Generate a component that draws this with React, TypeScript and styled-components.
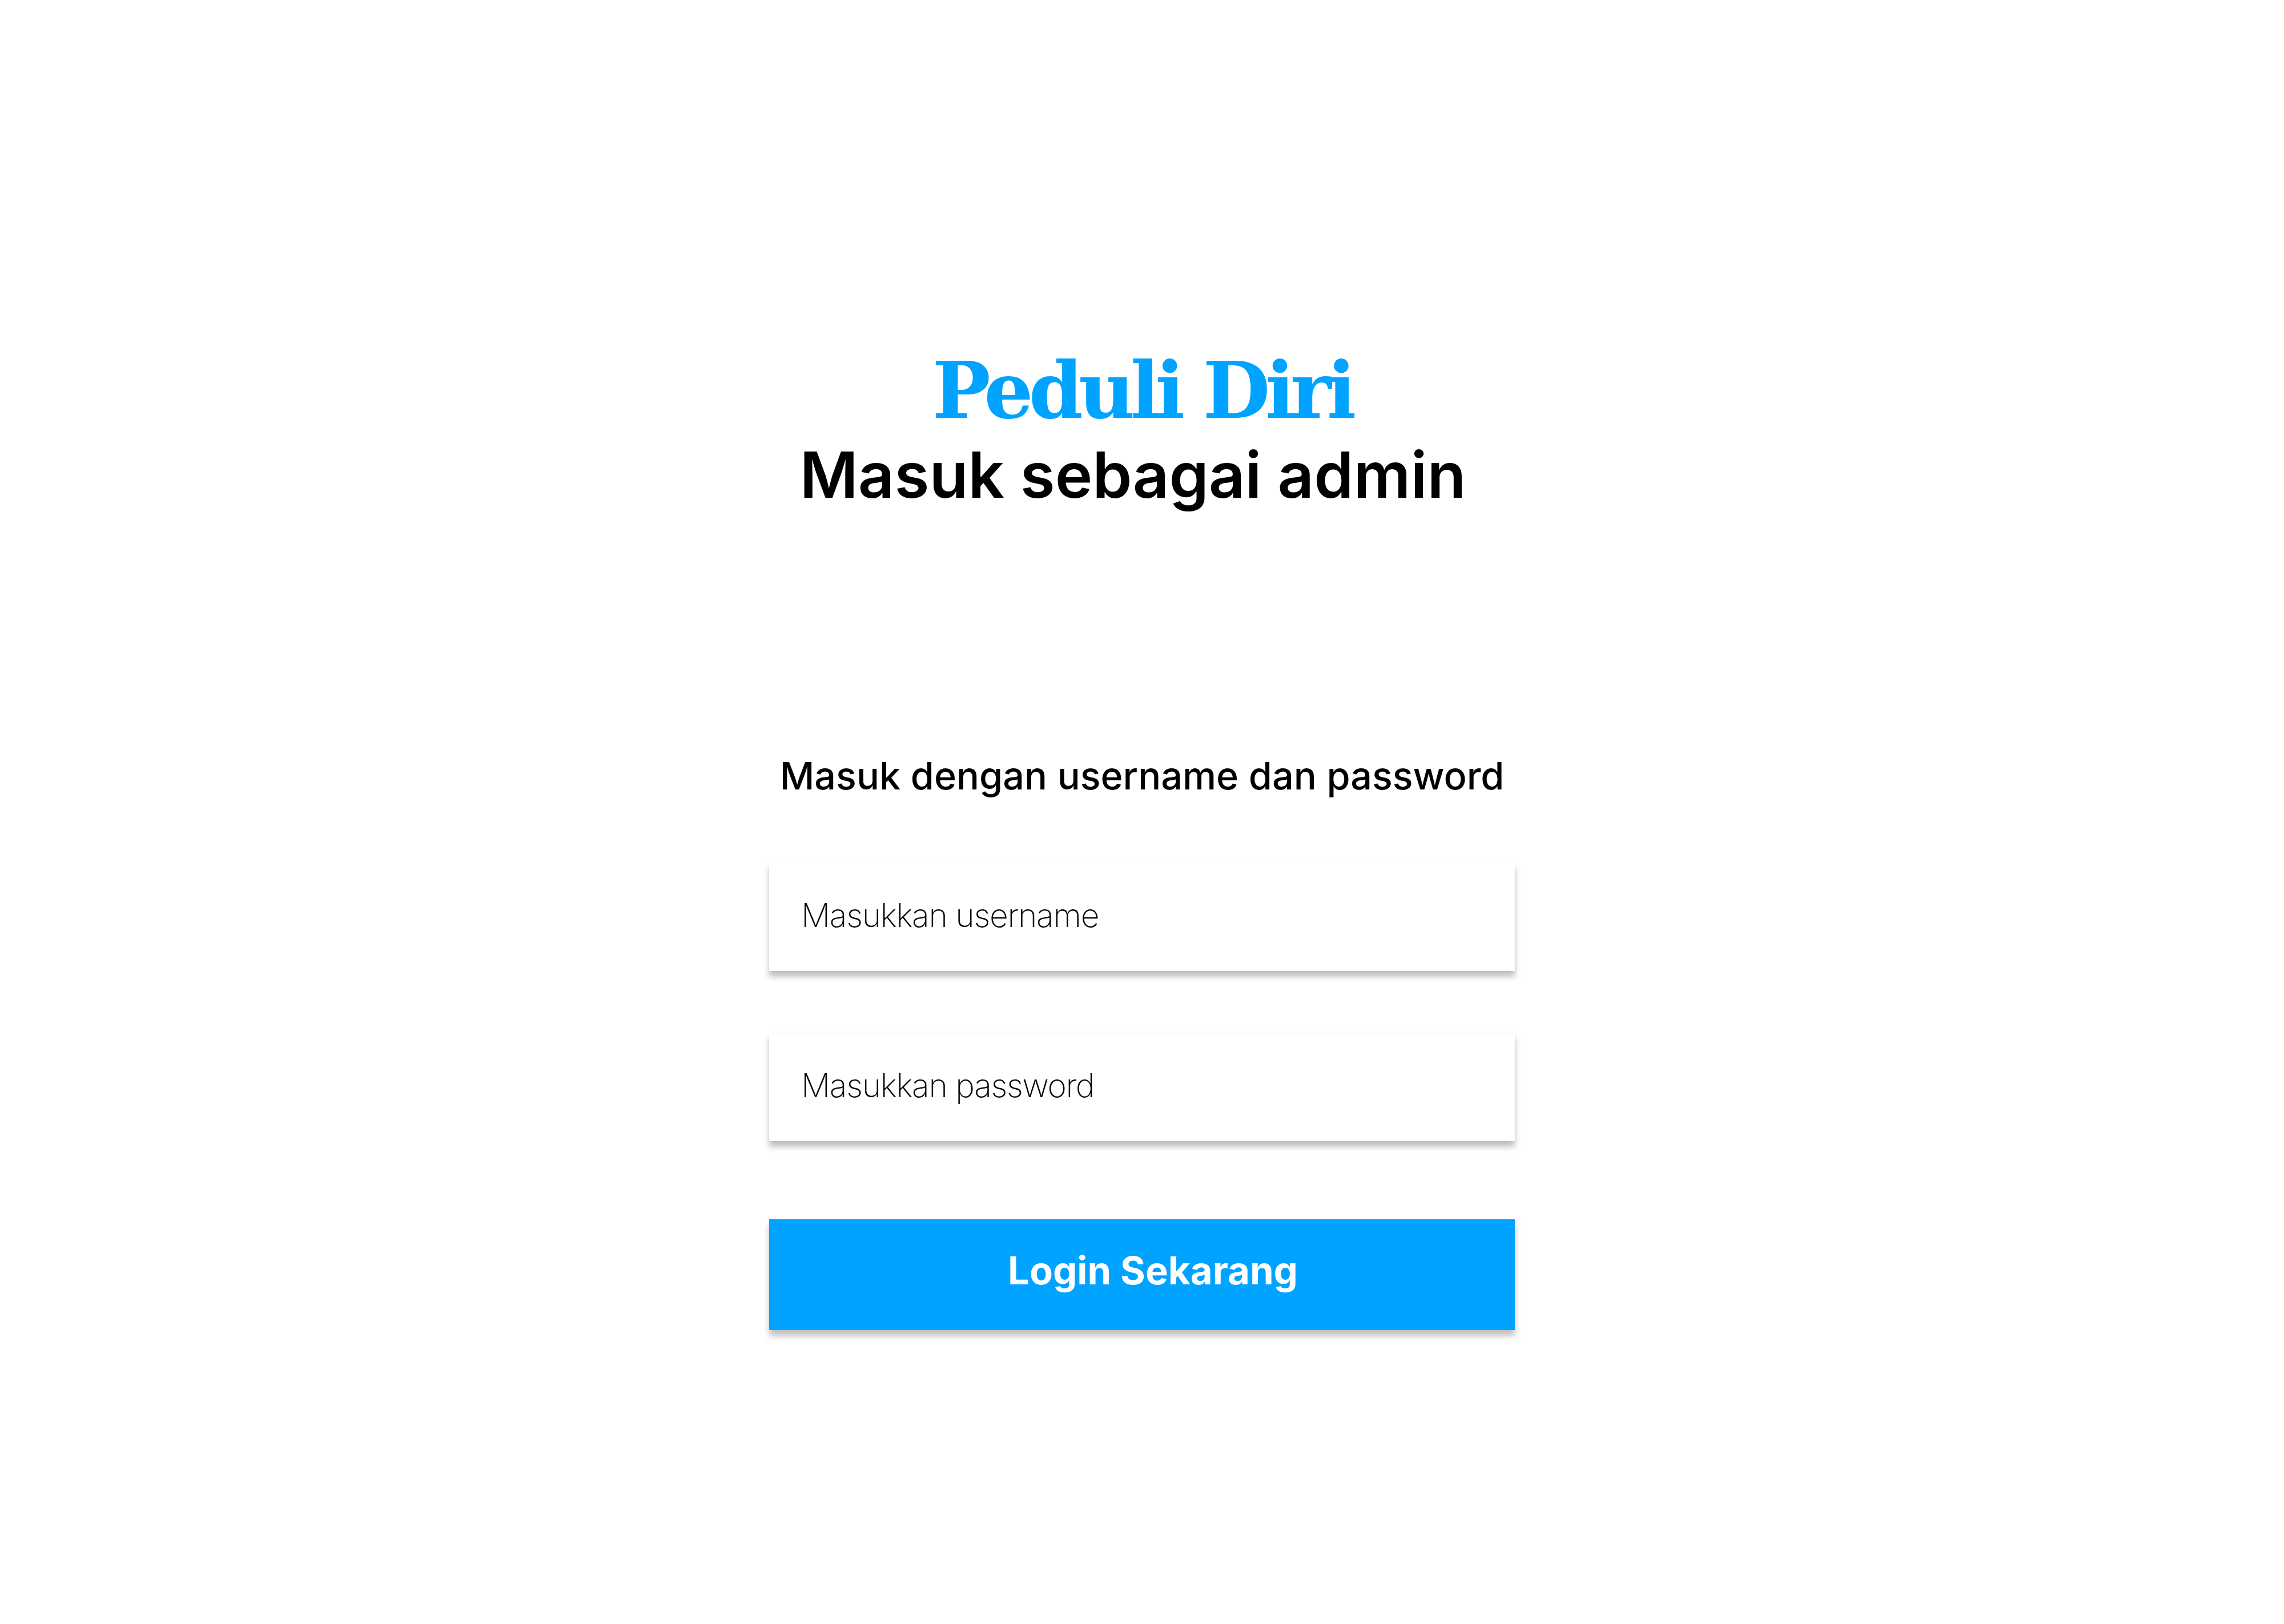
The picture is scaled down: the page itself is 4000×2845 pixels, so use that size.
import React from 'react';
import styled, { createGlobalStyle } from 'styled-components';

const GlobalStyle = createGlobalStyle`
  html, body {
    margin: 0;
    padding: 0;
    background: #ffffff;
  }

  body {
    font-family: Inter, "Noto Sans", sans-serif;
    color: #000000;
  }

  * {
    box-sizing: border-box;
  }
`;

const Page = styled.main`
  min-height: 2845px;
  display: flex;
  flex-direction: column;
  align-items: center;
  padding-top: 616px;
`;

const Header = styled.header`
  display: flex;
  flex-direction: column;
  align-items: center;
  gap: 24px;
`;

const Brand = styled.h1`
  margin: 0;
  font-family: "DejaVu Serif", "Liberation Serif", serif;
  font-weight: 700;
  font-size: 136px;
  line-height: 1;
  letter-spacing: -8px;
  color: #00a3ff;
`;

const Heading = styled.h2`
  margin: 0 32px 0 0;
  font-family: Inter, sans-serif;
  font-weight: 600;
  font-size: 111px;
  line-height: 1;
  color: #000000;
`;

const Form = styled.form`
  width: 1306px;
  margin-top: 439px;
  display: flex;
  flex-direction: column;
  align-items: stretch;
`;

const Prompt = styled.p`
  margin: 0 0 118px;
  text-align: center;
  font-family: Inter, sans-serif;
  font-weight: 500;
  font-size: 66.5px;
  line-height: 1;
  color: #000000;
`;

const Field = styled.input<{ $gap: number }>`
  display: block;
  width: 100%;
  height: 190px;
  margin: 0 0 ${(p) => p.$gap}px;
  padding: 0 56px 4px;
  border: none;
  outline: none;
  background: #ffffff;
  font-family: Inter, sans-serif;
  font-weight: 200;
  font-size: 57px;
  letter-spacing: -1.3px;
  color: #000000;
  box-shadow: 0 10px 10px rgba(0, 0, 0, 0.25), 0 0 4px rgba(0, 0, 0, 0.05);

  &::placeholder {
    color: #000000;
    opacity: 1;
  }
`;

const SubmitButton = styled.button`
  display: block;
  width: 100%;
  height: 194px;
  padding: 0 0 14px 38px;
  border: none;
  background: #00a3ff;
  color: #ffffff;
  font-family: Inter, sans-serif;
  font-weight: 700;
  font-size: 67px;
  cursor: pointer;
  box-shadow: 0 10px 10px rgba(0, 0, 0, 0.25);
`;

export default function App() {
  return (
    <>
      <GlobalStyle />
      <Page>
        <Header>
          <Brand>Peduli Diri</Brand>
          <Heading>Masuk sebagai admin</Heading>
        </Header>

        <Form onSubmit={(e) => e.preventDefault()}>
          <Prompt>Masuk dengan username dan password</Prompt>
          <Field $gap={108} type="text" placeholder="Masukkan username" />
          <Field $gap={137} type="password" placeholder="Masukkan password" />
          <SubmitButton type="submit">Login Sekarang</SubmitButton>
        </Form>
      </Page>
    </>
  );
}
